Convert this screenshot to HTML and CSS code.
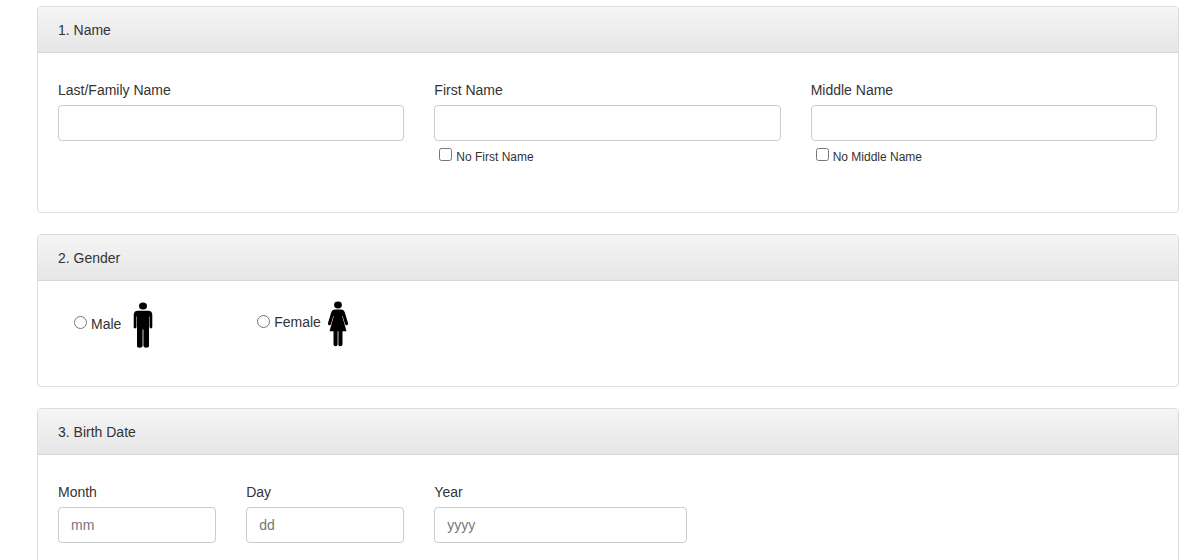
FILE: index.html
```html
<!DOCTYPE html>
<html lang="en">
<head>
<meta charset="utf-8">
<meta name="viewport" content="width=device-width, initial-scale=1">
<title>Entrant Information</title>
<link rel="stylesheet" href="styles.css">
</head>
<body>
<form class="form">
  <section class="panel">
    <h2 class="panel-title">1. Name</h2>
    <div class="panel-body grid name-body">
      <div class="field span-4">
        <label for="last">Last/Family Name</label>
        <input class="text" id="last" type="text">
      </div>
      <div class="field span-4">
        <label for="first">First Name</label>
        <input class="text" id="first" type="text">
        <div class="check"><input id="nofirst" type="checkbox"><label for="nofirst">No First Name</label></div>
      </div>
      <div class="field span-4">
        <label for="middle">Middle Name</label>
        <input class="text" id="middle" type="text">
        <div class="check"><input id="nomiddle" type="checkbox"><label for="nomiddle">No Middle Name</label></div>
      </div>
    </div>
  </section>

  <section class="panel">
    <h2 class="panel-title">2. Gender</h2>
    <div class="panel-body grid gender-body">
      <div class="option male">
        <input id="male" type="radio" name="gender">
        <label for="male">Male</label>
        <svg class="figure" viewBox="0 0 20 46" aria-hidden="true">
          <ellipse cx="10" cy="4" rx="4" ry="3.6"/>
          <path d="M5 8.800h10q4.300 0 4.300 4.300V25q0 1.400-1.300 1.400T16.500 25V14.500h-.5V44q0 1.700-2.700 1.700T10.400 44V27.500H9.600V44q0 1.700-2.900 1.700T4 44V14.500h-.5V25q0 1.400-1.500 1.400T.7 25V13.100Q.7 8.800 5 8.800z"/>
        </svg>
      </div>
      <div class="option female">
        <input id="female" type="radio" name="gender">
        <label for="female">Female</label>
        <svg class="figure" viewBox="0 0 20 46" aria-hidden="true">
          <ellipse cx="10" cy="4" rx="3.900" ry="3.400"/>
          <path d="M7 8.500h6q2.900 0 3.800 3L20 22q.4 1.700-1 2.200t-2-1.200L14.700 15h-.5l4.300 15.300h-4V43.500q0 1.700-2.100 1.700t-2-1.700V30.300H9.600V43.500q0 1.700-2 1.700t-2.100-1.700V30.300h-4L5.800 15h-.5L3 23q-.6 1.700-2 1.200T0 22L3.200 11.500q.9-3 3.800-3z"/>
        </svg>
      </div>
    </div>
  </section>

  <section class="panel">
    <h2 class="panel-title">3. Birth Date</h2>
    <div class="panel-body grid date-body">
      <div class="field span-2">
        <label for="month">Month</label>
        <input class="text" id="month" type="text" placeholder="mm">
      </div>
      <div class="field span-2">
        <label for="day">Day</label>
        <input class="text" id="day" type="text" placeholder="dd">
      </div>
      <div class="field span-3">
        <label for="year">Year</label>
        <input class="text" id="year" type="text" placeholder="yyyy">
      </div>
    </div>
  </section>
</form>
</body>
</html>
```
FILE: styles.css
```css
* { box-sizing: border-box; }
html { overflow-x: hidden; scrollbar-width: none; }
body {
  margin: 0;
  background: #fff;
  color: #333;
  font: 14px/20px "Liberation Sans", Arial, sans-serif;
}
.form {
  display: flex;
  flex-direction: column;
  gap: 21px;
  padding: 6px 21px 20px 37px;
}
.panel {
  border: 1px solid #ddd;
  border-radius: 4px;
}
.panel-title {
  margin: 0;
  padding: 13px 20px 12px;
  border-bottom: 1px solid #d8d8d8;
  border-radius: 3px 3px 0 0;
  background: linear-gradient(#f5f5f5, #e6e6e6);
  font-size: 14px;
  font-weight: 400;
}
.panel-body { padding: 27px 21px 16px 20px; }
.grid {
  display: grid;
  grid-template-columns: repeat(12, minmax(0, 1fr));
  column-gap: 30px;
}
.name-body { min-height: 159px; }
.gender-body {
  min-height: 105px;
  padding-top: 20px;
  align-items: start;
}
.date-body { min-height: 159px; }
.span-2 { grid-column: span 2; }
.span-3 { grid-column: span 3; }
.span-4 { grid-column: span 4; }
.field {
  display: flex;
  flex-direction: column;
  gap: 5px;
}
.text {
  width: 100%;
  height: 36px;
  padding: 0 12px;
  border: 1px solid #ccc;
  border-radius: 4px;
  background: #fff;
  color: #555;
  font: inherit;
}
.text::placeholder { color: #777; opacity: 1; }
.check {
  display: flex;
  align-items: flex-start;
  gap: 4px;
  padding: 2px 0 0 5px;
  font-size: 12px;
}
.check input { width: 13px; height: 13px; margin: 0; }
.check label { line-height: 18px; }
.option {
  display: flex;
  align-items: center;
  padding-left: 16px;
}
.option input { margin: 0 4px 5px 0; }
.option label { padding-bottom: 2px; }
.male { grid-column: 1 / span 2; padding-top: 1px; }
.female { grid-column: 3 / span 2; padding-left: 11px; }
.female input { margin-bottom: 6px; }
.female label { padding-bottom: 4px; }
.figure {
  width: 20px;
  height: 46px;
  flex: none;
  fill: #000;
}
.male .figure { margin-left: 12px; }
.female .figure { margin-left: 7px; }
```
